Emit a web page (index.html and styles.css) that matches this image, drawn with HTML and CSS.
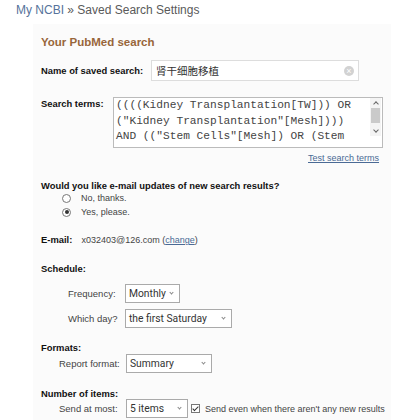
FILE: index.html
```html
<!DOCTYPE html>
<html lang="en">
  <head>
    <meta charset="UTF-8" />
    <title>My NCBI - Saved Search Settings</title>
    <link rel="stylesheet" href="styles.css">
  </head>
  <body>
    <h1 class="crumb"><a href="#">My NCBI</a> &raquo; Saved Search Settings</h1>

    <div class="panel">
      <h2>Your PubMed search</h2>

      <div class="row name-row">
        <span class="label">Name of saved search:</span>
        <div class="textbox">
          <span class="value">肾干细胞移植</span>
          <span class="clear">&times;</span>
        </div>
      </div>

      <div class="row terms-row">
        <span class="label">Search terms:</span>
        <div class="terms">
          <div class="terms-text">((((Kidney Transplantation[TW])) OR<br>("Kidney Transplantation"[Mesh])))<br>AND (("Stem Cells"[Mesh]) OR (Stem<br>Cells*[TW]) OR (Stem Cell[TW])))</div>
          <div class="scrollbar">
            <span class="arrow up"></span>
            <span class="thumb"></span>
            <span class="arrow down"></span>
            <span class="grip"></span>
          </div>
        </div>
      </div>
      <div class="test-link"><a href="#">Test search terms</a></div>

      <div class="question">Would you like e-mail updates of new search results?</div>
      <div class="radio"><span class="dot"></span>No, thanks.</div>
      <div class="radio"><span class="dot checked"></span>Yes, please.</div>

      <div class="email">
        <span class="label">E-mail:</span>
        x032403@126.com (<a href="#">change</a>)
      </div>

      <div class="section-title schedule">Schedule:</div>
      <div class="opt-row sched freq-row">
        <span class="opt-label">Frequency:</span>
        <span class="select freq">Monthly<i class="chev"></i></span>
      </div>
      <div class="opt-row sched day-row">
        <span class="opt-label">Which day?</span>
        <span class="select day">the first Saturday<i class="chev"></i></span>
      </div>

      <div class="section-title formats">Formats:</div>
      <div class="opt-row fmt">
        <span class="opt-label">Report format:</span>
        <span class="select report">Summary<i class="chev"></i></span>
      </div>

      <div class="section-title items">Number of items:</div>
      <div class="opt-row fmt items-row">
        <span class="opt-label">Send at most:</span>
        <span class="select count">5 items<i class="chev"></i></span>
        <span class="check"></span>
        <span class="check-text">Send even when there aren't any new results</span>
      </div>
    </div>
  </body>
</html>
```

FILE: styles.css
```css
* {
  box-sizing: border-box;
}

body {
  margin: 0;
  background: #fff;
  color: #444;
  font-family: "Liberation Sans", Arial, sans-serif;
  font-size: 9px;
}

a {
  color: #4a6a95;
}

.crumb {
  margin: 0;
  padding-left: 16px;
  font-size: 12px;
  font-weight: normal;
  color: #5a5a5a;
  line-height: 20px;
}

.crumb a {
  color: #56739b;
  text-decoration: none;
}

.panel {
  margin: 4px 0 0 33px;
  width: 358px;
  height: 396px;
  padding: 10px 0 0 8px;
  background: #fbfbfb;
}

h2 {
  margin: 0;
  font-size: 11.5px;
  color: #98663a;
  line-height: 16px;
}

.label {
  font-weight: bold;
  font-size: 9.4px;
  color: #111;
}

.row {
  display: flex;
  align-items: flex-start;
}

/* name of saved search */
.name-row {
  margin-top: 10px;
  align-items: center;
}

.name-row .label {
  width: 110px;
}

.textbox {
  width: 208px;
  height: 21px;
  border: 1px solid #ddd;
  background: #fff;
  display: flex;
  align-items: center;
  justify-content: space-between;
  padding: 0 4px 0 4px;
  font-family: "Noto Sans CJK SC", sans-serif;
  font-size: 10.5px;
  color: #333;
}

.clear {
  width: 10px;
  height: 10px;
  border-radius: 50%;
  background: #d2d2d2;
  color: #fff;
  font-size: 9px;
  line-height: 10px;
  text-align: center;
  font-family: "Liberation Sans", Arial, sans-serif;
}

/* search terms box */
.terms-row {
  margin-top: 16px;
}

.terms-row .label {
  width: 72px;
  padding-top: 1px;
}

.terms {
  width: 270px;
  height: 51px;
  border: 1px solid #bbb;
  background: #fff;
  display: flex;
  overflow: hidden;
}

.terms-text {
  flex: 1;
  padding: 0 0 0 2px;
  font-family: "Liberation Mono", "Courier New", monospace;
  font-size: 11.2px;
  line-height: 15.5px;
  color: #444;
  white-space: nowrap;
  overflow: hidden;
}

.scrollbar {
  width: 11px;
  margin: 0 1px 0 0;
  background: #f4f4f4;
  display: flex;
  flex-direction: column;
  align-items: center;
}

.arrow {
  height: 10px;
  width: 11px;
  position: relative;
}

.arrow::after {
  content: "";
  position: absolute;
  left: 4px;
  width: 3px;
  height: 3px;
  border-left: 1px solid #666;
  border-top: 1px solid #666;
}

.arrow.up::after {
  top: 4px;
  transform: rotate(45deg);
}

.arrow.down::after {
  top: 2px;
  transform: rotate(225deg);
}

.thumb {
  width: 9px;
  height: 15px;
  background: #cacaca;
  margin-bottom: 3px;
}

.grip {
  flex: 1;
  width: 11px;
  background: #fff;
}

.test-link {
  margin: 4px 0 0 267px;
  line-height: 12px;
}

/* e-mail updates */
.question {
  margin-top: 16px;
  font-weight: bold;
  font-size: 9.4px;
  color: #111;
  line-height: 11px;
}

.radio {
  display: flex;
  align-items: center;
  margin-left: 21px;
  height: 14px;
}

.dot {
  width: 9px;
  height: 9px;
  border: 1px solid #777;
  border-radius: 50%;
  margin-right: 10px;
  background: #fff;
  position: relative;
}

.dot.checked::after {
  content: "";
  position: absolute;
  left: 1.5px;
  top: 1.5px;
  width: 4px;
  height: 4px;
  border-radius: 50%;
  background: #333;
}

.email {
  margin-top: 15px;
  line-height: 12px;
}

.email .label {
  display: inline-block;
  width: 38px;
}

.section-title {
  font-weight: bold;
  font-size: 9.4px;
  color: #111;
  line-height: 12px;
}

.schedule {
  margin-top: 17px;
}

.formats {
  margin-top: 14px;
}

.items {
  margin-top: 15px;
}

/* option rows */
.opt-row {
  display: flex;
  align-items: center;
  height: 19px;
}

.sched {
  padding-left: 27px;
}

.freq-row {
  margin-top: 9px;
}

.day-row {
  margin-top: 6px;
}

.sched .opt-label {
  width: 57px;
}

.fmt {
  padding-left: 18px;
}

.items-row {
  margin-top: -1px;
}

.fmt .opt-label {
  width: 67px;
}

.opt-label {
  font-size: 9.5px;
}

.select {
  position: relative;
  height: 19px;
  border: 1px solid #aaa;
  background: #fff;
  padding: 0 0 0 3px;
  font-family: Roboto, sans-serif;
  font-size: 10.3px;
  line-height: 17px;
  color: #333;
}

.chev {
  position: absolute;
  right: 6px;
  top: 6px;
  width: 3px;
  height: 3px;
  border-right: 1px solid #888;
  border-bottom: 1px solid #888;
  transform: rotate(45deg);
}

.freq {
  width: 55px;
}

.day {
  width: 107px;
}

.report {
  width: 86px;
}

.count {
  width: 62px;
}

.check {
  width: 9px;
  height: 9px;
  border: 1px solid #777;
  margin: 0 5px 0 3px;
  background: #fff;
  position: relative;
}

.check::after {
  content: "";
  position: absolute;
  left: 2px;
  top: 0;
  width: 2px;
  height: 5px;
  border-right: 1px solid #333;
  border-bottom: 1px solid #333;
  transform: rotate(45deg);
}
```
